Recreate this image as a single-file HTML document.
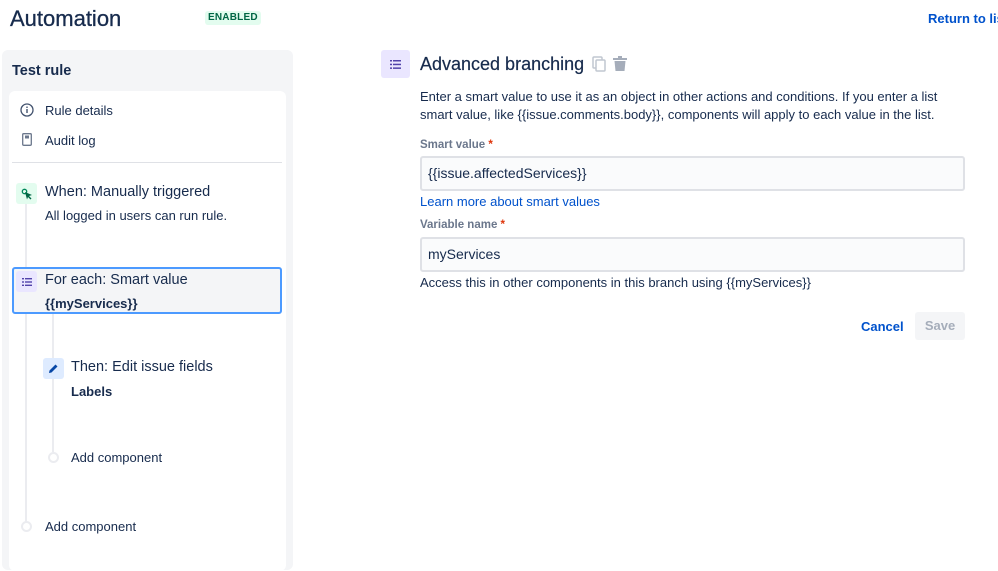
<!DOCTYPE html>
<html><head><meta charset="utf-8"><style>
*{margin:0;padding:0;box-sizing:border-box}
body{width:998px;height:555px;overflow:hidden;background:#fff;font-family:"Liberation Sans",sans-serif;color:#172b4d;position:relative}
.a{position:absolute;white-space:nowrap}
.t14{font-size:14px}
.t13{font-size:13px}
.ib{position:absolute;border-radius:3px;display:flex;align-items:center;justify-content:center}
.inp{position:absolute;left:420px;width:545px;height:35px;background:#fafbfc;border:2px solid #dfe1e6;border-radius:3px;font-size:14px;padding:7px 6px}
.lbl{font-size:11.5px;font-weight:bold;color:#6b778c}
.req{color:#de350b}
</style></head><body>
<div class="a" style="left:10px;top:5px;font-size:22px;line-height:28px;-webkit-text-stroke:0.3px #172b4d">Automation</div>
<div class="a" style="left:205px;top:11px;height:14px;padding:0 3px;background:#e3fcef;color:#006644;font-size:10px;font-weight:bold;line-height:14px;border-radius:3px;letter-spacing:.2px">ENABLED</div>
<div class="a" style="left:928px;top:11px;color:#0052cc;font-size:13px;font-weight:bold">Return to list</div>

<div class="a" style="left:2px;top:50px;width:291px;height:520px;background:#f4f5f7;border-radius:6px"></div>
<div class="a" style="left:12px;top:63px;font-size:14.5px;font-weight:bold">Test rule</div>
<div class="a" style="left:9px;top:91px;width:277px;height:480px;background:#fff;border-radius:6px"></div>

<svg class="a" style="left:20px;top:103px" width="14" height="14" viewBox="0 0 14 14"><circle cx="7" cy="7" r="6" fill="none" stroke="#42526e" stroke-width="1.3"/><rect x="6.3" y="6" width="1.4" height="4" fill="#42526e"/><circle cx="7" cy="4.2" r=".8" fill="#42526e"/></svg>
<div class="a t13" style="left:45px;top:103px">Rule details</div>
<svg class="a" style="left:22px;top:133px" width="10" height="13" viewBox="0 0 10 13"><rect x=".7" y=".7" width="8.6" height="11.6" rx="1" fill="none" stroke="#6b778c" stroke-width="1.3"/><rect x="3" y="2.5" width="4" height="3" fill="#6b778c"/></svg>
<div class="a t13" style="left:45px;top:133px">Audit log</div>
<div class="a" style="left:12px;top:162px;width:270px;height:1px;background:#dfe1e6"></div>

<div class="a" style="left:25px;top:204px;width:2px;height:318px;background:#ebecf0"></div>
<div class="ib" style="left:16px;top:183px;width:21px;height:21px;background:#e3fcef"><svg width="12" height="12" viewBox="0 0 12 12"><circle cx="3.5" cy="3.5" r="2.2" fill="none" stroke="#00875a" stroke-width="1.3"/><path d="M4 4 L11 7 L8 8 L10.5 10.5 L9.5 11.5 L7 9 L6 11.5Z" fill="#006644"/></svg></div>
<div class="a t14" style="left:45px;top:184px;font-size:14.5px">When: Manually triggered</div>
<div class="a t13" style="left:45px;top:208px">All logged in users can run rule.</div>

<div class="a" style="left:12px;top:267px;width:270px;height:47px;background:#f4f5f7;border:2px solid #4c9aff;border-radius:3px"></div>
<div class="ib" style="left:16px;top:271px;width:21px;height:21px;background:#eae6ff"><svg width="10" height="8" viewBox="0 0 10 8"><g fill="#5243aa"><rect x="0" y="0" width="2" height="1.4"/><rect x="3" y="0" width="7" height="1.4"/><rect x="0" y="3.3" width="2" height="1.4"/><rect x="3" y="3.3" width="7" height="1.4"/><rect x="0" y="6.6" width="2" height="1.4"/><rect x="3" y="6.6" width="7" height="1.4"/></g></svg></div>
<div class="a" style="left:45px;top:272px;font-size:14.5px">For each: Smart value</div>
<div class="a t13" style="left:45px;top:296px;font-weight:bold">{{myServices}}</div>

<div class="a" style="left:52px;top:314px;width:2px;height:138px;background:#ebecf0"></div>
<div class="ib" style="left:43px;top:358px;width:21px;height:21px;background:#deebff"><svg width="11" height="11" viewBox="0 0 11 11"><path d="M1 10 L1.5 7.5 L7.5 1.5 L9.5 3.5 L3.5 9.5Z" fill="#0747a6"/></svg></div>
<div class="a" style="left:71px;top:359px;font-size:14.5px">Then: Edit issue fields</div>
<div class="a t13" style="left:71px;top:384px;font-weight:bold">Labels</div>
<div class="a" style="left:48px;top:452px;width:11px;height:11px;border:2px solid #ebecf0;border-radius:50%;background:#fff"></div>
<div class="a t13" style="left:71px;top:450px">Add component</div>
<div class="a" style="left:21px;top:521px;width:11px;height:11px;border:2px solid #ebecf0;border-radius:50%;background:#fff"></div>
<div class="a t13" style="left:45px;top:519px">Add component</div>

<div class="ib" style="left:381px;top:50px;width:29px;height:28px;background:#eae6ff"><svg width="11" height="9" viewBox="0 0 11 9"><g fill="#5243aa"><rect x="0" y="0" width="2" height="1.5"/><rect x="3" y="0" width="8" height="1.5"/><rect x="0" y="3.7" width="2" height="1.5"/><rect x="3" y="3.7" width="8" height="1.5"/><rect x="0" y="7.4" width="2" height="1.5"/><rect x="3" y="7.4" width="8" height="1.5"/></g></svg></div>
<div class="a" style="left:420px;top:54px;font-size:18px;-webkit-text-stroke:0.2px #172b4d">Advanced branching</div>
<svg class="a" style="left:592px;top:56px" width="14" height="16" viewBox="0 0 14 16"><rect x="1" y="1" width="9" height="11" rx="1" fill="none" stroke="#c1c7d0" stroke-width="1.5"/><rect x="4" y="4" width="9" height="11" rx="1" fill="#fff" stroke="#c1c7d0" stroke-width="1.5"/></svg>
<svg class="a" style="left:613px;top:56px" width="14" height="16" viewBox="0 0 14 16"><rect x="0" y="2" width="14" height="2" fill="#a5adba"/><rect x="5" y="0" width="4" height="2" fill="#a5adba"/><path d="M1.5 5 H12.5 L11.5 15 H2.5Z" fill="#a5adba"/></svg>
<div class="a t13" style="left:420px;top:88px;line-height:18px;white-space:normal;width:540px">Enter a smart value to use it as an object in other actions and conditions. If you enter a list smart value, like {{issue.comments.body}}, components will apply to each value in the list.</div>
<div class="a lbl" style="left:420px;top:139px">Smart value <span class="req">*</span></div>
<div class="inp" style="top:156px">{{issue.affectedServices}}</div>
<div class="a t13" style="left:420px;top:194px;color:#0052cc">Learn more about smart values</div>
<div class="a lbl" style="left:420px;top:219px">Variable name <span class="req">*</span></div>
<div class="inp" style="top:237px">myServices</div>
<div class="a t13" style="left:420px;top:275px">Access this in other components in this branch using {{myServices}}</div>
<div class="a" style="left:861px;top:319px;color:#0052cc;font-size:13px;font-weight:bold">Cancel</div>
<div class="a" style="left:915px;top:312px;width:50px;height:28px;background:#f4f5f7;border-radius:3px;color:#a5adba;font-size:13px;font-weight:bold;text-align:center;line-height:28px">Save</div>
</body></html>
